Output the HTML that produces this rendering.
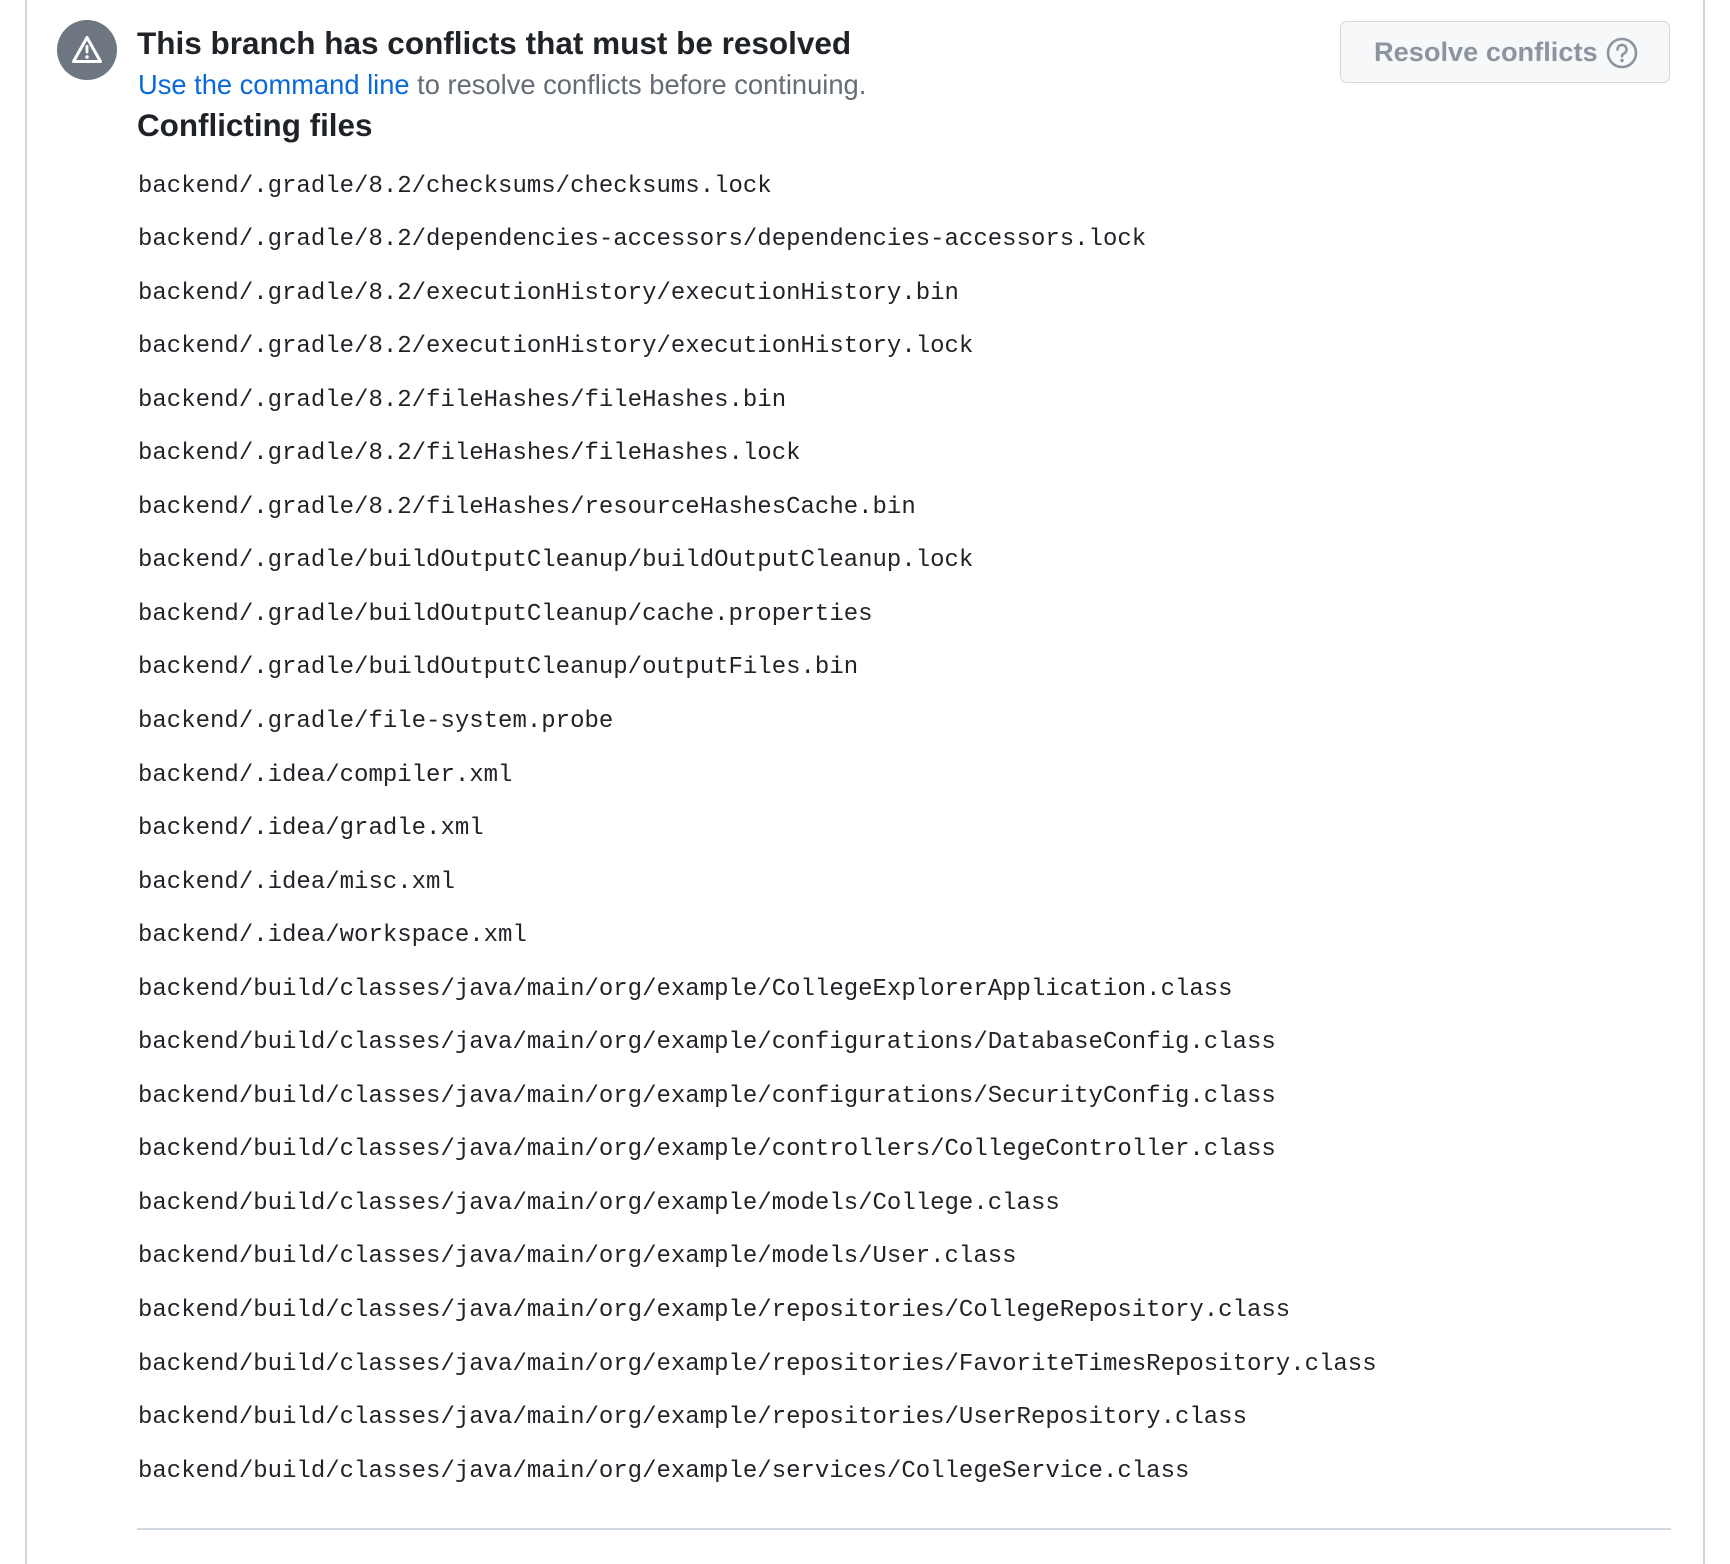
<!DOCTYPE html>
<html><head><meta charset="utf-8"><style>
html,body{margin:0;padding:0;background:#fff;width:1730px;height:1564px;overflow:hidden;position:relative;font-family:"Liberation Sans",sans-serif}
.vl{position:absolute;left:25px;top:0;width:2px;height:1564px;background:#d0d7de}
.vr{position:absolute;left:1703px;top:0;width:2px;height:1564px;background:#d0d7de}
.ic{position:absolute;left:57px;top:20px;width:60px;height:60px;border-radius:50%;background:#6e7781}
.t{position:absolute;left:137px;top:23px;font-weight:bold;font-size:31.5px;color:#1f2328;white-space:nowrap;line-height:40px}
.s{position:absolute;left:138px;top:70px;font-size:27.3px;color:#656d76;white-space:nowrap;line-height:30px}
.s a{color:#0969da;text-decoration:none}
.h{position:absolute;left:137px;top:106px;font-weight:bold;font-size:31.4px;color:#1f2328;white-space:nowrap;line-height:40px}
.f{position:absolute;left:138px;top:159.5px;font-family:"Liberation Mono",monospace;font-size:24px;color:#1f2328;line-height:53.55px;white-space:pre}
.rule{position:absolute;left:137px;top:1528px;width:1534px;height:2px;background:#d0d7de}
.btn{position:absolute;left:1340px;top:21px;width:328px;height:60px;border:1px solid #d0d7de;border-radius:7px;background:#f6f8fa;box-sizing:content-box}
.btn span{position:absolute;left:33px;top:15px;font-size:27.2px;font-weight:bold;color:#8c959f;white-space:nowrap;line-height:30px}
.btn svg{position:absolute;left:264px;top:14px}
</style></head><body>
<div class="vl"></div><div class="vr"></div>
<div class="ic"><svg width="60" height="60" viewBox="0 0 60 60"><path d="M30 17.5 L43.5 41.5 H16.5 Z" fill="none" stroke="#fff" stroke-width="3" stroke-linejoin="round"/><rect x="28.6" y="25" width="2.8" height="8.5" rx="1.2" fill="#fff"/><circle cx="30" cy="37" r="1.7" fill="#fff"/></svg></div>
<div class="t">This branch has conflicts that must be resolved</div>
<div class="s"><a>Use the command line</a> to resolve conflicts before continuing.</div>
<div class="h">Conflicting files</div>
<div class="f">backend/.gradle/8.2/checksums/checksums.lock
backend/.gradle/8.2/dependencies-accessors/dependencies-accessors.lock
backend/.gradle/8.2/executionHistory/executionHistory.bin
backend/.gradle/8.2/executionHistory/executionHistory.lock
backend/.gradle/8.2/fileHashes/fileHashes.bin
backend/.gradle/8.2/fileHashes/fileHashes.lock
backend/.gradle/8.2/fileHashes/resourceHashesCache.bin
backend/.gradle/buildOutputCleanup/buildOutputCleanup.lock
backend/.gradle/buildOutputCleanup/cache.properties
backend/.gradle/buildOutputCleanup/outputFiles.bin
backend/.gradle/file-system.probe
backend/.idea/compiler.xml
backend/.idea/gradle.xml
backend/.idea/misc.xml
backend/.idea/workspace.xml
backend/build/classes/java/main/org/example/CollegeExplorerApplication.class
backend/build/classes/java/main/org/example/configurations/DatabaseConfig.class
backend/build/classes/java/main/org/example/configurations/SecurityConfig.class
backend/build/classes/java/main/org/example/controllers/CollegeController.class
backend/build/classes/java/main/org/example/models/College.class
backend/build/classes/java/main/org/example/models/User.class
backend/build/classes/java/main/org/example/repositories/CollegeRepository.class
backend/build/classes/java/main/org/example/repositories/FavoriteTimesRepository.class
backend/build/classes/java/main/org/example/repositories/UserRepository.class
backend/build/classes/java/main/org/example/services/CollegeService.class</div>
<div class="rule"></div>
<div class="btn"><span>Resolve conflicts</span><svg width="34" height="34" viewBox="0 0 34 34"><circle cx="17" cy="17" r="14" fill="none" stroke="#8c959f" stroke-width="2.6"/><path d="M12.5 13.5 a4.5 4.5 0 1 1 6.5 4 c-1.3 0.7 -2 1.4 -2 2.8" fill="none" stroke="#8c959f" stroke-width="2.6" stroke-linecap="round"/><circle cx="17" cy="24.5" r="1.7" fill="#8c959f"/></svg></div>
</body></html>
